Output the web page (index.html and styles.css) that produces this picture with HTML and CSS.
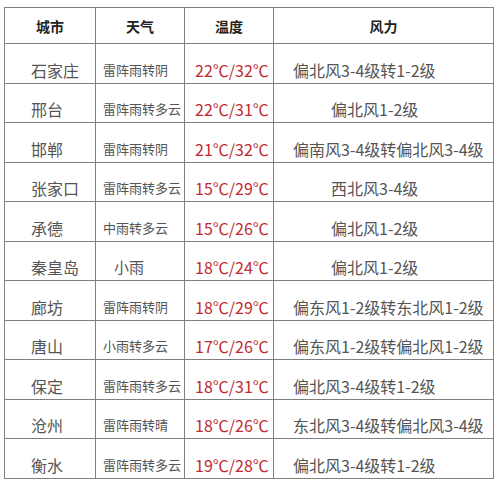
FILE: index.html
```html
<!DOCTYPE html>
<html lang="zh-CN">
<head>
<meta charset="utf-8">
<title>天气预报</title>
<link rel="stylesheet" href="styles.css">
</head>
<body>
<table class="weather">
  <colgroup>
    <col class="c-city">
    <col class="c-sky">
    <col class="c-temp">
    <col class="c-wind">
  </colgroup>
  <thead>
    <tr class="head">
      <th>城市</th><th>天气</th><th>温度</th><th>风力</th>
    </tr>
  </thead>
  <tbody>
    <tr><td class="city">石家庄</td><td class="sky">雷阵雨转阴</td><td class="temp">22℃/32℃</td><td class="wind">偏北风3-4级转1-2级</td></tr>
    <tr><td class="city">邢台</td><td class="sky">雷阵雨转多云</td><td class="temp">22℃/31℃</td><td class="wind short">偏北风1-2级</td></tr>
    <tr><td class="city">邯郸</td><td class="sky">雷阵雨转阴</td><td class="temp">21℃/32℃</td><td class="wind">偏南风3-4级转偏北风3-4级</td></tr>
    <tr><td class="city">张家口</td><td class="sky">雷阵雨转多云</td><td class="temp">15℃/29℃</td><td class="wind short">西北风3-4级</td></tr>
    <tr><td class="city">承德</td><td class="sky">中雨转多云</td><td class="temp">15℃/26℃</td><td class="wind short">偏北风1-2级</td></tr>
    <tr><td class="city">秦皇岛</td><td class="sky big">小雨</td><td class="temp">18℃/24℃</td><td class="wind short">偏北风1-2级</td></tr>
    <tr><td class="city">廊坊</td><td class="sky">雷阵雨转阴</td><td class="temp">18℃/29℃</td><td class="wind">偏东风1-2级转东北风1-2级</td></tr>
    <tr><td class="city">唐山</td><td class="sky">小雨转多云</td><td class="temp">17℃/26℃</td><td class="wind">偏东风1-2级转偏北风1-2级</td></tr>
    <tr><td class="city">保定</td><td class="sky">雷阵雨转多云</td><td class="temp">18℃/31℃</td><td class="wind">偏北风3-4级转1-2级</td></tr>
    <tr><td class="city">沧州</td><td class="sky">雷阵雨转晴</td><td class="temp">18℃/26℃</td><td class="wind">东北风3-4级转偏北风3-4级</td></tr>
    <tr><td class="city">衡水</td><td class="sky">雷阵雨转多云</td><td class="temp">19℃/28℃</td><td class="wind">偏北风3-4级转1-2级</td></tr>
  </tbody>
</table>
</body>
</html>
```

FILE: styles.css
```css
html, body {
  margin: 0;
  padding: 0;
  background: #ffffff;
}

body {
  font-family: "Noto Sans CJK SC", "Noto Sans", sans-serif;
  color: #555555;
}

.weather {
  margin: 7px 0 0 4px;
  border-collapse: collapse;
  table-layout: fixed;
  width: 489px;
}

.c-city { width: 91px; }
.c-sky { width: 89px; }
.c-temp { width: 89px; }
.c-wind { width: 220px; }

.weather th,
.weather td {
  border: 1px solid #808080;
  padding: 0;
  white-space: nowrap;
  overflow: hidden;
}

.head th {
  height: 35px;
  font-size: 14px;
  font-weight: 700;
  color: #222222;
  text-align: center;
  vertical-align: middle;
}

.weather tbody tr {
  height: 39.5px;
}

.weather td {
  vertical-align: middle;
  padding-top: 13px;
  line-height: 20px;
  text-align: left;
}

.city {
  font-size: 16px;
  padding-left: 26px !important;
}

.sky {
  font-size: 13px;
  padding-left: 7px !important;
}

.sky.big {
  font-size: 15px;
  padding-left: 18px !important;
}

.temp {
  font-size: 16px;
  color: #bf2a2f;
  padding-left: 10px !important;
}

.wind {
  font-size: 16px;
  padding-left: 19px !important;
}

.wind.short {
  padding-left: 57px !important;
}
```
